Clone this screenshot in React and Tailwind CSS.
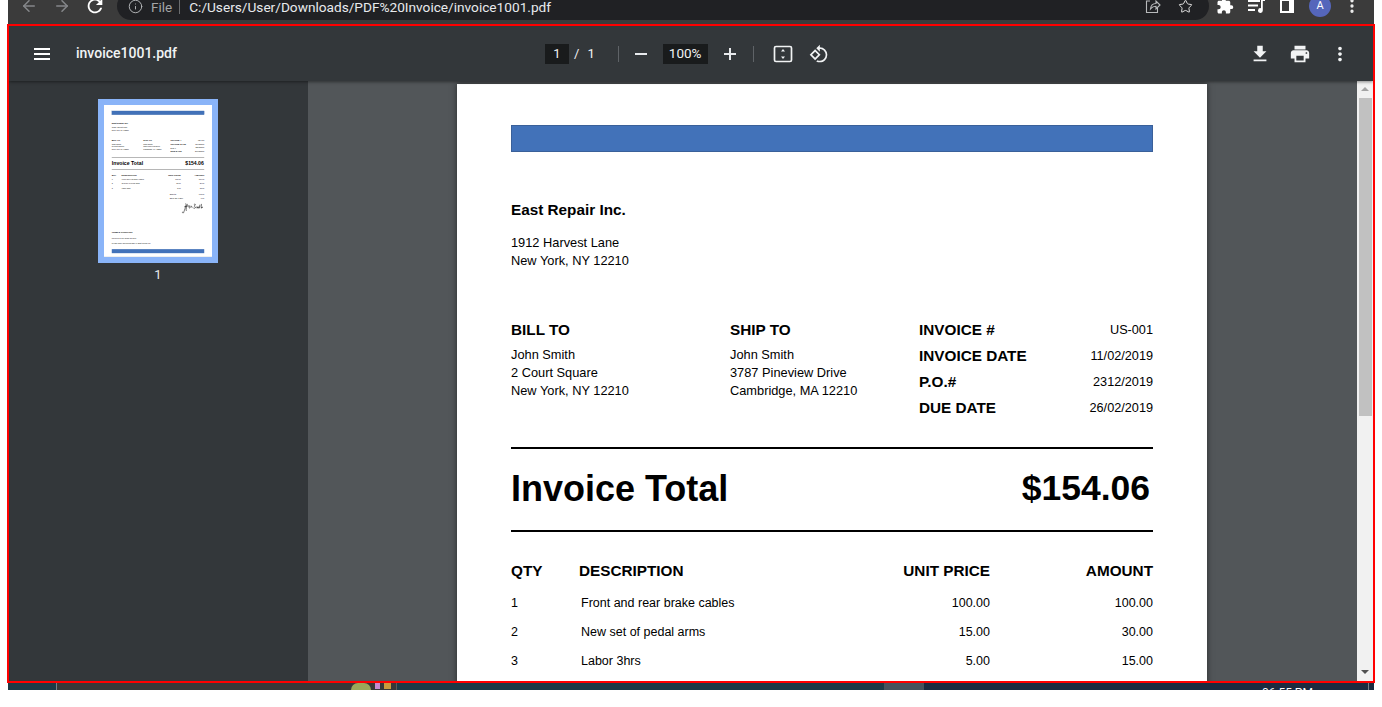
import React from 'react';
import { ArrowLeft, ArrowRight, Info, Star, EllipsisVertical } from 'lucide-react';
import { MdExtension, MdFileDownload, MdPrint, MdMoreVert, MdRotate90DegreesCcw, MdRefresh } from 'react-icons/md';

const items = [
  ['1', 'Front and rear brake cables', '100.00', '100.00'],
  ['2', 'New set of pedal arms', '15.00', '30.00'],
  ['3', 'Labor 3hrs', '5.00', '15.00'],
];

function ShareIcon() {
  return (
    <svg width="16" height="16" viewBox="0 0 16 16" fill="none" stroke="#b8babc" strokeWidth="1.1">
      <path d="M5 3H1.5v11.5h11V10" />
      <path d="M5.5 11c.3-3.5 2.5-5.5 5.5-5.5V3l4 4-4 4V8.300c-2.200 0-4 .8-5.500 2.700z" />
    </svg>
  );
}

function QueueIcon() {
  return (
    <svg width="18" height="16" viewBox="0 0 18 16" fill="white">
      <path d="M0 2h12v2H0zM0 6.500h10v2H0zM0 11h7v2H0z" />
      <path d="M13 1h4v2h-2.200v9.500a2.400 2.400 0 1 1-1.800-2.300z" />
    </svg>
  );
}

function FitIcon() {
  return (
    <svg width="20" height="20" viewBox="0 0 20 20" fill="none" stroke="#f1f3f4" strokeWidth="1.700">
      <rect x="1.500" y="2.500" width="17" height="15" rx="1.500" />
      <path d="M10 5l-2 2.600h4zM10 15l-2-2.600h4z" fill="#f1f3f4" stroke="none" />
    </svg>
  );
}

function Signature() {
  return (
    <svg width="150" height="90" viewBox="0 0 160 90" fill="none" stroke="black" strokeWidth="4">
      <path d="M30 10c12 4-8 50-14 68-3 8-12 2-8-6M20 36c20-8 34-8 46-6M44 14c-6 20-12 38-8 52M58 30c-4 10 0 20 6 12 4-6 8-14 10-10 2 6 2 12 8 6M92 18c14-8 14 6 4 10-8 4 14 6 6 16-4 4-10 2-14 0M112 34l4 12 6-12 4 12 6-12M136 20l-2 26M148 14c-2 12-2 24 0 32 2-10 8-14 10-2" />
    </svg>
  );
}

function InvoiceDoc() {
  return (
    <div className="w-[750px] h-[1055px] bg-white px-[54px] pt-[41px] text-black font-['Liberation_Sans',Arial,sans-serif]">
      <div className="h-[27px] bg-[#4272b9] border border-[#3a6099]" />
      <div className="mt-[49px] text-[15.3px] leading-[18px] font-bold">East Repair Inc.</div>
      <div className="mt-[15px] text-[12.8px] leading-[18px]">
        <div>1912 Harvest Lane</div>
        <div>New York, NY 12210</div>
      </div>

      <div className="mt-[47px] grid grid-cols-[219px_189px_1fr]">
        <div className="pt-[4px]">
          <div className="text-[15.3px] leading-[18px] font-bold">BILL TO</div>
          <div className="mt-[7px] text-[12.8px] leading-[18px]">
            <div>John Smith</div>
            <div>2 Court Square</div>
            <div>New York, NY 12210</div>
          </div>
        </div>
        <div className="pt-[4px]">
          <div className="text-[15.3px] leading-[18px] font-bold">SHIP TO</div>
          <div className="mt-[7px] text-[12.8px] leading-[18px]">
            <div>John Smith</div>
            <div>3787 Pineview Drive</div>
            <div>Cambridge, MA 12210</div>
          </div>
        </div>
        <div>
          {[
            ['INVOICE #', 'US-001'],
            ['INVOICE DATE', '11/02/2019'],
            ['P.O.#', '2312/2019'],
            ['DUE DATE', '26/02/2019'],
          ].map(([label, value]) => (
            <div key={label} className="h-[26px] flex items-center justify-between">
              <span className="text-[15.3px] font-bold">{label}</span>
              <span className="mt-[2px] text-[12.7px]">{value}</span>
            </div>
          ))}
        </div>
      </div>

      <div className="mt-[26px] h-[1.5px] bg-black" />
      <div className="h-[81.500px] flex items-center justify-between text-[36px] font-bold pr-[3px]">
        <span>Invoice Total</span>
        <span className="-mt-[2px] text-[35.5px]">$154.06</span>
      </div>
      <div className="h-[1.5px] bg-black" />

      <div className="mt-[30px] grid grid-cols-[68px_1fr_150px_163px] text-[15.3px] leading-[18px] font-bold">
        <div>QTY</div>
        <div>DESCRIPTION</div>
        <div className="text-right">UNIT PRICE</div>
        <div className="text-right">AMOUNT</div>
      </div>
      <div className="mt-[9px]">
        {items.map(([qty, desc, unit, amount]) => (
          <div key={qty} className="h-[29px] grid grid-cols-[68px_1fr_150px_163px] items-center text-[12.500px]">
            <div>{qty}</div>
            <div className="pl-[2px]">{desc}</div>
            <div className="text-right">{unit}</div>
            <div className="text-right">{amount}</div>
          </div>
        ))}
      </div>

      <div className="mt-[13px] ml-auto w-[240px] text-[12.500px] leading-[28px]">
        <div className="flex justify-between"><span>Subtotal</span><span>145.00</span></div>
        <div className="flex justify-between"><span>Sales Tax 6.25%</span><span>9.06</span></div>
      </div>
      <div className="mt-[10px] mr-[8px] flex justify-end"><Signature /></div>

      <div className="mt-[113px] text-[13px] leading-[18px] font-bold">TERMS &amp; CONDITIONS</div>
      <div className="mt-[24px] text-[12.500px] leading-[18px]">Payment is due within 15 days</div>
      <div className="mt-[21px] text-[12.500px] leading-[18px]">Please make checks payable to: East Repair Inc.</div>
      <div className="mt-[28px] h-[28px] bg-[#4272b9]" />
    </div>
  );
}

function ChromeBar() {
  return (
    <div className="ml-px w-[1366px] h-[24px] bg-[#3b3b3b] overflow-hidden">
      <div className="-mt-[12px] h-[36px] flex items-center text-white">
        <ArrowLeft size={18} strokeWidth={2} className="ml-[12px] text-[#85878a]" />
        <ArrowRight size={18} strokeWidth={2} className="ml-[15px] text-[#85878a]" />
        <MdRefresh size={22} className="ml-[13px] text-white" />
        <div className="ml-[11px] w-[1092px] h-[28px] rounded-full bg-[#202124] flex items-center font-['Roboto',sans-serif]">
          <Info size={15} strokeWidth={1.500} className="ml-[11px] text-[#b8babc]" />
          <span className="ml-[8px] mt-[2px] text-[#a3a5a7] text-[13.500px] leading-[12px]">File</span>
          <span className="ml-[7px] w-px h-[16px] bg-[#6a6c6e]" />
          <span className="ml-[9px] mt-[2px] text-[#e8eaed] text-[13.660px] leading-[12px]">C:/Users/User/Downloads/PDF%20Invoice/invoice1001.pdf</span>
          <span className="ml-auto"><ShareIcon /></span>
          <Star size={15} strokeWidth={1.600} className="ml-[17px] mr-[16px] text-[#e0e0e0]" />
        </div>
        <MdExtension size={18} className="ml-[7px]" />
        <span className="ml-[14px]"><QueueIcon /></span>
        <div className="ml-[14px] w-[14px] h-[14px] bg-white flex justify-start">
          <div className="ml-[2px] mt-[2px] w-[7px] h-[10px] bg-[#3b3b3b]" />
        </div>
        <div className="ml-[15px] w-[22px] h-[22px] rounded-full bg-[#5566bb] flex items-center justify-center text-[11px] font-['Roboto',sans-serif]">A</div>
        <EllipsisVertical size={18} strokeWidth={2.400} className="ml-[12px] text-[#eee]" />
      </div>
    </div>
  );
}

function PdfToolbar() {
  return (
    <div className="relative z-10 h-[55px] bg-[#33373a] shadow-[0_1px_3px_rgba(0,0,0,0.45)] flex items-center text-[#f1f3f4] font-['Roboto',sans-serif]">
      <div className="ml-[25px] w-[16px] flex flex-col gap-[3px]">
        <span className="h-[2px] bg-white" />
        <span className="h-[2px] bg-white" />
        <span className="h-[2px] bg-white" />
      </div>
      <span className="ml-[26px] w-[469px] text-[14px] font-medium">invoice1001.pdf</span>
      <div className="w-[24px] h-[20px] bg-[#191b1c] flex items-center justify-center text-[13px]">1</div>
      <span className="ml-[5px] text-[13px]">/</span>
      <span className="ml-[8px] text-[13px]">1</span>
      <span className="ml-[23px] w-px h-[16px] bg-[#5f6367]" />
      <span className="ml-[16px] w-[12px] h-[2px] bg-[#e8eaed]" />
      <div className="ml-[16px] w-[45px] h-[20px] bg-[#191b1c] flex items-center justify-center text-[13.500px]">100%</div>
      <svg className="ml-[16px]" width="12" height="12" viewBox="0 0 12 12" fill="#e8eaed">
        <path d="M5 0h2v5h5v2H7v5H5V7H0V5h5z" />
      </svg>
      <span className="ml-[17px] w-px h-[16px] bg-[#5f6367]" />
      <span className="ml-[19px]"><FitIcon /></span>
      <MdRotate90DegreesCcw size={20} className="ml-[16px]" />
      <MdFileDownload size={22} className="ml-auto" />
      <MdPrint size={22} className="ml-[18px]" />
      <MdMoreVert size={22} className="ml-[18px] mr-[22px]" />
    </div>
  );
}

function Sidebar() {
  return (
    <div className="w-[299px] shrink-0 bg-[#33373a] flex flex-col items-center pt-[18px]">
      <div className="-ml-[1px] border-[6px] border-[#8ab4f8]">
        <div className="w-[108px] h-[152px] overflow-hidden">
          <div className="origin-top-left scale-[0.144]"><InvoiceDoc /></div>
        </div>
      </div>
      <span className="-ml-[1px] mt-[4px] text-[13px] leading-[16px] text-[#e8eaed] font-['Roboto',sans-serif]">1</span>
    </div>
  );
}

function Scrollbar() {
  return (
    <div className="w-[16px] shrink-0 bg-[#f1f1f1] flex flex-col items-center">
      <div className="mt-[6px] w-0 h-0 border-x-[4px] border-x-transparent border-b-[4px] border-b-[#a3a3a3]" />
      <div className="mt-[7px] w-[13px] h-[318px] bg-[#c1c1c1]" />
      <div className="mt-auto mb-[7px] w-0 h-0 border-x-[4px] border-x-transparent border-t-[4px] border-t-[#505050]" />
    </div>
  );
}

function Taskbar() {
  return (
    <div className="ml-px w-[1366px] h-[7px] flex overflow-hidden">
      <div className="w-[48px] bg-[#1d3a46]" />
      <div className="w-px bg-[#77808a]" />
      <div className="w-[340px] bg-[#383838] border-r border-[#5a5a5a] flex justify-end items-start pr-[5px] gap-[4px]">
        <div className="w-[20px] h-[14px] rounded-full bg-[#9aa85a]" />
        <div className="w-[5px] h-[6px] bg-[#c48ad0]" />
        <div className="w-[7px] h-[6px] bg-[#c89a3c]" />
      </div>
      <div className="w-[487px] bg-[#1d3a46]" />
      <div className="w-[40px] bg-[#47525c]" />
      <div className="flex-1 bg-[#1b2b40] text-white text-[12px] leading-[12px] pt-[4px] pl-[338px] font-['Roboto',sans-serif]">06:55 PM</div>
      <div className="w-px bg-[#77808a]" />
      <div className="w-[5px] bg-[#1b2b40]" />
    </div>
  );
}

export default function App() {
  return (
    <div className="h-[707px] w-[1382px] bg-white pl-[7px] overflow-hidden">
      <ChromeBar />
      <div className="w-[1368px] h-[659px] border-2 border-[#ff0000] flex flex-col overflow-hidden">
        <PdfToolbar />
        <div className="flex-1 min-h-0 flex">
          <Sidebar />
          <div className="flex-1 min-w-0 bg-[#525659] pt-[3px] pr-[1px] flex justify-center overflow-hidden">
            <div className="h-fit shadow-[0_0_6px_rgba(0,0,0,0.5)]"><InvoiceDoc /></div>
          </div>
          <Scrollbar />
        </div>
      </div>
      <Taskbar />
    </div>
  );
}
